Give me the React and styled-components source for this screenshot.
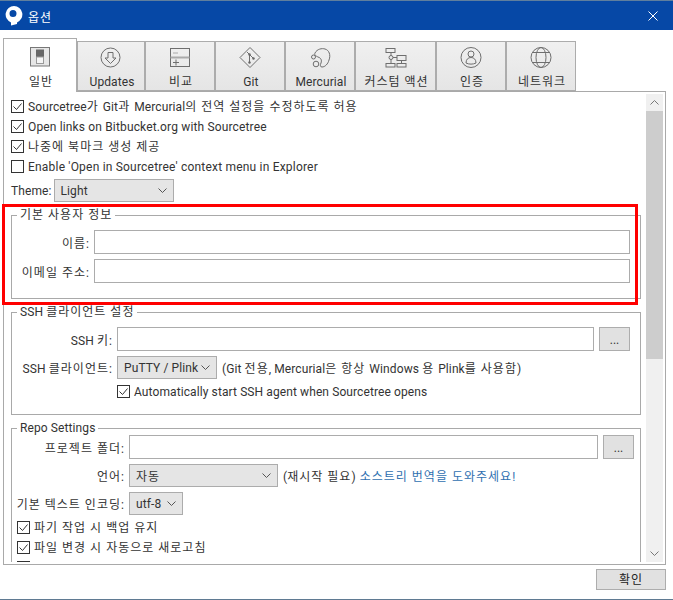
import React from "react";
import styled, { createGlobalStyle } from "styled-components";

const Global = createGlobalStyle`
  html, body { margin: 0; padding: 0; background: #fff; }
  * { box-sizing: border-box; }
  body { font-family: Roboto, "Noto Sans CJK KR", sans-serif; font-size: 12px; color: #333; letter-spacing: .1px; }
`;

const Dialog = styled.div`
  position: relative; width: 673px; height: 600px; display: flex; flex-direction: column;
  background: #fff; overflow: hidden; border-bottom: 1px solid #5f7a92;
`;
const TitleBar = styled.header`
  height: 30px; flex: none; display: flex; align-items: center; gap: 5px; padding: 1px 15px 0 5px;
  background: #0648a6; border-top: 1px solid #5f7f9e; color: #fff;
`;
const TitleText = styled.span`flex: 1; font-size: 12px; padding-top: 1px;`;
const Main = styled.main`padding: 8px 7px 0 3px; display: flex; flex-direction: column;`;
const TabRow = styled.nav`display: flex; align-items: flex-end; height: 53px; position: relative; z-index: 1;`;
const Tab = styled.div`
  width: ${p => p.$w}px; height: ${p => (p.$active ? 54 : 50)}px; margin-bottom: ${p => (p.$active ? -1 : 0)}px;
  display: flex; flex-direction: column; align-items: center;
  padding-top: ${p => (p.$active ? 8 : 4)}px;
  border: 1px solid #acacac; ${p => p.$active && "border-bottom: none;"}
  background: ${p => (p.$active ? "#fff" : "linear-gradient(#f0f0f0, #e5e5e5)")};
`;
const TabLabel = styled.span`
  font-size: 12px; line-height: 16px; margin-top: ${p => (p.$active ? 5 : 6)}px; padding-left: 2px; white-space: nowrap;
`;
const Panel = styled.section`
  height: 474px; width: 663px; border: 1px solid #a9a9a9; display: flex; gap: 2px; padding: 2px 1px 2px 0;
`;
const Content = styled.div`flex: 1; min-width: 0; overflow: hidden; padding: 2px 1px 0 7px;`;
const Scrollbar = styled.div`
  width: 17px; flex: none; background: #f0f0f0; display: flex; flex-direction: column; margin-right: 1px;
`;
const ScrollArrow = styled.div`height: 17px; flex: none; display: flex; align-items: center; justify-content: center;`;
const ScrollThumb = styled.div`height: 248px; flex: none; background: #cdcdcd;`;
const ScrollSpace = styled.div`flex: 1;`;
const CheckRow = styled.label`
  display: flex; align-items: center; gap: 4px; height: 20px; white-space: nowrap;
  letter-spacing: ${p => p.$track ?? ".1px"};
`;
const CheckText = styled.span`line-height: 16px; padding-top: 1px;`;
const Box = styled.span`
  width: 13px; height: 13px; flex: none; border: 1px solid #333; background: #fff;
  display: flex; align-items: center; justify-content: center;
`;
const ThemeRow = styled.div`display: flex; align-items: center; gap: 2px; margin-top: 3px;`;
const Select = styled.div`
  width: ${p => p.$w}px; height: 23px; flex: none; display: flex; align-items: center; justify-content: space-between;
  padding: 0 6px; background: #e5e5e5; border: 1px solid #acacac;
`;
const Group = styled.fieldset`
  margin: 6px 0 0; padding: ${p => p.$pt}px 10px 0 0; width: 630px; height: ${p => p.$h}px;
  border: 1px solid #a9a9a9; min-width: 0;
`;
const Legend = styled.legend`
  margin-left: 5px; padding: 0 3px; line-height: 14px; height: 14px; font-size: 12px; white-space: nowrap;
`;
const FormRow = styled.div`
  display: flex; align-items: center; gap: 5px; margin-bottom: 5px;
`;
const Label = styled.span`
  width: ${p => p.$w}px; flex: none; text-align: right; white-space: nowrap;
`;
const TextBox = styled.div`
  flex: 1; height: 24px; background: #fff; border: 1px solid #acacac;
`;
const DotsButton = styled.button`
  width: 31px; height: 24px; flex: none; padding: 2px 0 0; background: #e1e1e1; border: 1px solid #adadad;
  font: inherit; color: #333; line-height: 1; margin-right: ${p => p.$mr ?? 0}px;
`;
const Note = styled.span`white-space: nowrap;`;
const LinkText = styled.a`color: #2f6fb0; margin-left: 4px;`;
const CheckIndent = styled.div`padding-left: ${p => p.$pl}px; margin-top: -3px;`;
const Footer = styled.footer`display: flex; justify-content: flex-end; padding: 4px 0 0 0;`;
const OkButton = styled.button`
  width: 70px; height: 21px; padding: 0; background: #e1e1e1; border: 1px solid #adadad; font: inherit;
  font-size: 12px; color: #222; line-height: 1;
`;
const Annotation = styled.div`
  position: absolute; left: 2px; top: 204px; width: 636px; height: 101px; border: 3px solid #f00; pointer-events: none; z-index: 2;
`;
const Hangul = styled.span`letter-spacing: 1px;`;

/* Malgun Gothic sets Hangul wider than Noto Sans CJK: only the Hangul runs get extra tracking. */
const T = ({ children }) =>
  String(children).split(/([\uAC00-\uD7A3][\uAC00-\uD7A3 ]*)/).map((part, i) =>
    i % 2 ? <Hangul key={i}>{part}</Hangul> : part
  );

const stroke = { fill: "none", stroke: "#6e6e6e", strokeWidth: 1 };
const Ico = ({ children }) => (
  <svg width="22" height="22" viewBox="0 0 22 22" style={{ display: "block", flex: "none" }}>{children}</svg>
);
const GeneralIcon = () => (
  <Ico>
    <rect x="1.500" y=".500" width="19" height="18.500" fill="#e6e6e6" stroke="#777" />
    <rect x="7" y="2.500" width="8" height="7.500" fill="#666" />
    <rect x="7.500" y="10" width="7" height="6.500" fill="#f4f4f4" stroke="#999" />
  </Ico>
);
const UpdatesIcon = () => (
  <Ico>
    <circle cx="10.500" cy="11.500" r="9.500" {...stroke} />
    <path d="M8 6.500h5v5.500h3l-5.500 5.500L5 12h3z" {...stroke} />
  </Ico>
);
const CompareIcon = () => (
  <Ico>
    <rect x="1.500" y="2.500" width="19" height="18" {...stroke} />
    <path d="M1.500 11.500h19" fill="none" stroke="#aaa" strokeWidth="2" />
    <path d="M4 7h5" fill="none" stroke="#aaa" />
    <path d="M4 16.500h6M7 13.500v6" {...stroke} />
  </Ico>
);
const GitIcon = () => (
  <Ico>
    <path d="M11 1.500l10 10-10 10-10-10z" {...stroke} />
    <path d="M8 6l6.500 6.500M10.500 8.500v8" {...stroke} />
    <circle cx="10.500" cy="8.500" r="1.200" fill="#666" />
    <circle cx="14.500" cy="12.500" r="1.200" fill="#666" />
    <circle cx="10.500" cy="16.500" r="1.200" fill="#666" />
  </Ico>
);
const MercurialIcon = () => (
  <Ico>
    <path d="M6 7C8 3 13 2 16 3c4 1 6 6 4 11-1 4-4 7-7 7-2 0-2-2-1-4 1-3 0-5-3-6-2-1-4-2-3-4z" {...stroke} />
    <circle cx="4.500" cy="11" r="2" {...stroke} />
    <circle cx="7" cy="18" r="2.800" {...stroke} />
  </Ico>
);
const CustomIcon = () => (
  <Ico>
    <rect x="1" y="2.500" width="9" height="4" {...stroke} />
    <rect x="12" y="9.500" width="9" height="5" {...stroke} />
    <rect x="1" y="17.500" width="9" height="3.500" {...stroke} />
    <rect x="12" y="17.500" width="9" height="3.500" {...stroke} />
    <path d="M6 6.500v11M6 11.500h6M16.500 14.500v3" {...stroke} />
    <circle cx="6" cy="11.500" r="2" fill="#eaeaea" stroke="#6e6e6e" />
  </Ico>
);
const AuthIcon = () => (
  <Ico>
    <circle cx="11" cy="11.500" r="10" {...stroke} />
    <circle cx="11" cy="8" r="3" {...stroke} />
    <path d="M6 17c0-3.500 2-5.500 5-5.500s5 2 5 5.500c-3 1.500-7 1.500-10 0z" {...stroke} />
  </Ico>
);
const GlobeIcon = () => (
  <Ico>
    <circle cx="11" cy="11.500" r="10" {...stroke} />
    <ellipse cx="11" cy="11.500" rx="5" ry="10" {...stroke} />
    <path d="M2.500 6.500h17M2.500 16.500h17" {...stroke} />
  </Ico>
);
const Chevron = ({ up, color = "#555" }) => (
  <svg width="9" height="5" viewBox="0 0 9 5" style={{ display: "block" }}>
    <path d={up ? "M.5 4.500l4-4 4 4" : "M.5.500l4 4 4-4"} fill="none" stroke={color} />
  </svg>
);
const Logo = () => (
  <svg width="18" height="20" viewBox="0 0 18 20" style={{ display: "block", flex: "none" }}>
    <path fillRule="evenodd" fill="#fff" d="M9 0a8.500 8.500 0 0 1 3 16.400V18l-6 1.600v-3.200A8.500 8.500 0 0 1 9 0zM8 4a3.500 3.500 0 1 0 0 7 3.500 3.500 0 0 0 0-7z" />
  </svg>
);
const CloseIcon = () => (
  <svg width="10" height="10" viewBox="0 0 10 10" style={{ display: "block" }}>
    <path d="M.5.500l9 9M9.500.500l-9 9" stroke="#fff" fill="none" />
  </svg>
);
const Check = ({ on = true, track, children }) => (
  <CheckRow $track={track}>
    <Box>
      {on && (
        <svg width="11" height="11" viewBox="0 0 11 11">
          <path d="M1.500 5.500l3 3 5-6" fill="none" stroke="#333" />
        </svg>
      )}
    </Box>
    <CheckText><T>{children ?? ""}</T></CheckText>
  </CheckRow>
);

const tabs = [
  { label: "일반", w: 74, icon: <GeneralIcon />, active: true },
  { label: "Updates", w: 68, icon: <UpdatesIcon /> },
  { label: "비교", w: 70, icon: <CompareIcon /> },
  { label: "Git", w: 70, icon: <GitIcon /> },
  { label: "Mercurial", w: 70, icon: <MercurialIcon /> },
  { label: "커스텀 액션", w: 81, icon: <CustomIcon /> },
  { label: "인증", w: 70, icon: <AuthIcon /> },
  { label: "네트워크", w: 70, icon: <GlobeIcon /> },
];

export default function App() {
  return (
    <>
      <Global />
      <Dialog>
        <TitleBar>
          <Logo />
          <TitleText><T>옵션</T></TitleText>
          <CloseIcon />
        </TitleBar>
        <Main>
          <TabRow>
            {tabs.map(t => (
              <Tab key={t.label} $w={t.w} $active={t.active}>
                {t.icon}
                <TabLabel $active={t.active}><T>{t.label}</T></TabLabel>
              </Tab>
            ))}
          </TabRow>
          <Panel>
            <Content>
              <Check>Sourcetree가 Git과 Mercurial의 전역 설정을 수정하도록 허용</Check>
              <Check track=".15px">Open links on Bitbucket.org with Sourcetree</Check>
              <Check>나중에 북마크 생성 제공</Check>
              <Check on={false} track=".2px">Enable 'Open in Sourcetree' context menu in Explorer</Check>
              <ThemeRow>
                <span>Theme:</span>
                <Select $w={120}><span>Light</span><Chevron /></Select>
              </ThemeRow>
              <Group $pt={8} $h={91}>
                <Legend><T>기본 사용자 정보</T></Legend>
                <FormRow><Label $w={77}><T>이름:</T></Label><TextBox /></FormRow>
                <FormRow><Label $w={77}><T>이메일 주소:</T></Label><TextBox /></FormRow>
              </Group>
              <Group $pt={8} $h={110}>
                <Legend><T>SSH 클라이언트 설정</T></Legend>
                <FormRow>
                  <Label $w={100}><T>SSH 키:</T></Label><TextBox /><DotsButton>...</DotsButton>
                </FormRow>
                <FormRow>
                  <Label $w={100}><T>SSH 클라이언트:</T></Label>
                  <Select $w={100}><span>PuTTY / Plink</span><Chevron /></Select>
                  <Note><T>(Git 전용, Mercurial은 항상 Windows 용 Plink를 사용함)</T></Note>
                </FormRow>
                <CheckIndent $pl={105}>
                  <Check>Automatically start SSH agent when Sourcetree opens</Check>
                </CheckIndent>
              </Group>
              <Group $pt={0} $h={160}>
                <Legend>Repo Settings</Legend>
                <FormRow>
                  <Label $w={112}><T>프로젝트 폴더:</T></Label><TextBox /><DotsButton $mr={-4}>...</DotsButton>
                </FormRow>
                <FormRow>
                  <Label $w={112}><T>언어:</T></Label>
                  <Select $w={149}><span><T>자동</T></span><Chevron /></Select>
                  <Note><T>(재시작 필요)</T><LinkText><T>소스트리 번역을 도와주세요!</T></LinkText></Note>
                </FormRow>
                <FormRow>
                  <Label $w={112}><T>기본 텍스트 인코딩:</T></Label>
                  <Select $w={54}><span>utf-8</span><Chevron /></Select>
                </FormRow>
                <CheckIndent $pl={5}>
                  <Check>파기 작업 시 백업 유지</Check>
                  <Check>파일 변경 시 자동으로 새로고침</Check>
                  <Check on={false} />
                </CheckIndent>
              </Group>
            </Content>
            <Scrollbar>
              <ScrollArrow><Chevron up color="#777" /></ScrollArrow>
              <ScrollThumb />
              <ScrollSpace />
              <ScrollArrow><Chevron color="#777" /></ScrollArrow>
            </Scrollbar>
          </Panel>
          <Footer>
            <OkButton><T>확인</T></OkButton>
          </Footer>
        </Main>
        <Annotation />
      </Dialog>
    </>
  );
}
